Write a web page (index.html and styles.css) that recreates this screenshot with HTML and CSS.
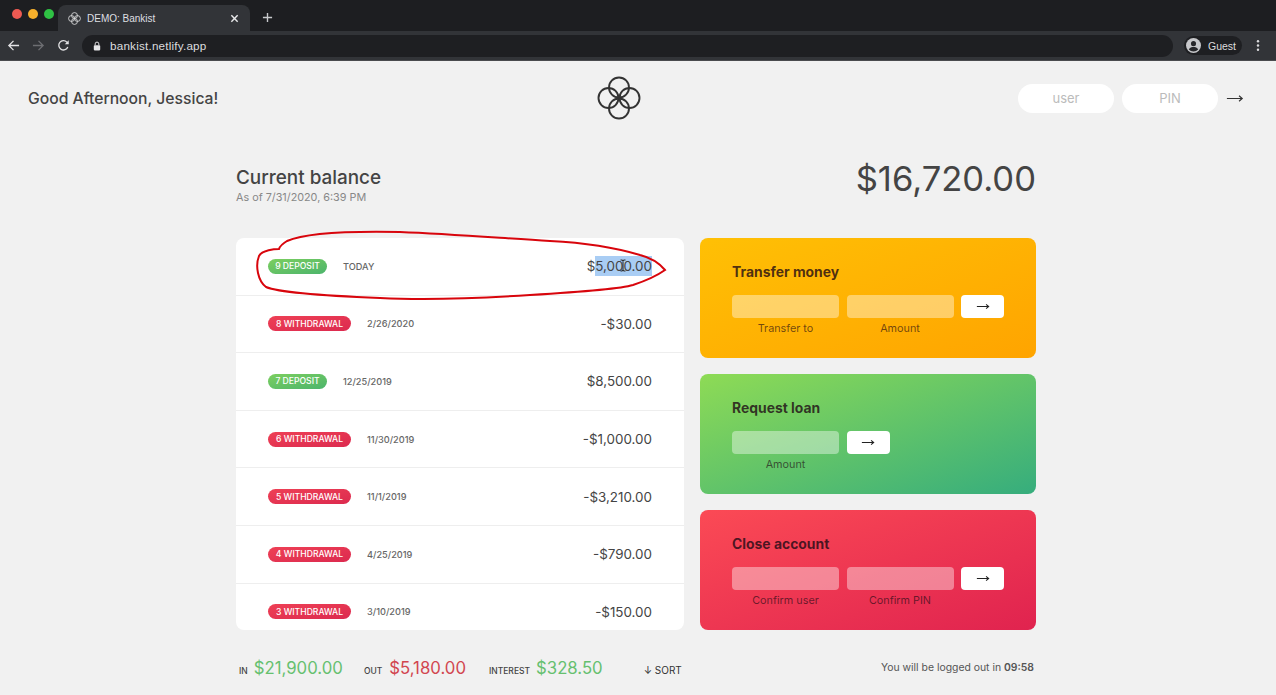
FILE: index.html
```html
<!DOCTYPE html>
<html lang="en">
<head>
<meta charset="utf-8">
<title>Bankist</title>
<link rel="stylesheet" href="styles.css">
</head>
<body>
<div class="chrome">
  <div class="tabbar">
    <div class="lights"><i class="light red"></i><i class="light amber"></i><i class="light green"></i></div>
    <div class="tab">
      <svg class="favicon" viewBox="0 0 44 44"><g fill="none" stroke="#d8d8da" stroke-width="3"><circle cx="22" cy="12" r="10"/><circle cx="22" cy="32" r="10"/><circle cx="12" cy="22" r="10"/><circle cx="32" cy="22" r="10"/></g></svg>
      <span class="tab-title">DEMO: Bankist</span>
      <svg class="tab-close" viewBox="0 0 10 10"><path d="M1.5 1.5l7 7M8.5 1.5l-7 7" stroke="#e8e8ea" stroke-width="1.6" fill="none"/></svg>
    </div>
    <svg class="newtab" viewBox="0 0 12 12"><path d="M6 1v10M1 6h10" stroke="#c8c9cc" stroke-width="1.5" fill="none"/></svg>
  </div>
  <div class="toolbar">
    <svg class="tool" viewBox="0 0 14 14"><path d="M13 7H2M7 2L2 7l5 5" stroke="#e3e3e5" stroke-width="1.4" fill="none"/></svg>
    <svg class="tool" viewBox="0 0 14 14"><path d="M1 7h11M7 2l5 5-5 5" stroke="#6d6e72" stroke-width="1.4" fill="none"/></svg>
    <svg class="tool" viewBox="0 0 14 14"><path d="M11.6 8.6A5 5 0 1 1 10.6 3.4L12 5" stroke="#e3e3e5" stroke-width="1.4" fill="none"/><path d="M12.6 1.4v4.2H8.4z" fill="#e3e3e5"/></svg>
    <div class="omnibox">
      <svg class="lock" viewBox="0 0 10 12"><path d="M2.700 5V3.400a2.300 2.300 0 0 1 4.600 0V5" stroke="#e6e6e8" stroke-width="1.2" fill="none"/><rect x="1" y="5" width="8" height="6.500" rx="1" fill="#e6e6e8"/></svg>
      <span class="url">bankist.netlify.app</span>
    </div>
    <div class="profile">
      <svg class="avatar" viewBox="0 0 16 16"><circle cx="8" cy="8" r="8" fill="#c6c7ca"/><circle cx="8" cy="6" r="2.700" fill="#26272a"/><path d="M3 12.200c1-2 3-2.600 5-2.600s4 .6 5 2.600A6.600 6.600 0 0 1 8 14.500a6.600 6.600 0 0 1-5-2.300z" fill="#26272a"/></svg>
      <span class="guest">Guest</span>
    </div>
    <svg class="kebab" viewBox="0 0 4 14"><g fill="#dcdcde"><circle cx="2" cy="2.500" r="1.300"/><circle cx="2" cy="7" r="1.300"/><circle cx="2" cy="11.500" r="1.300"/></g></svg>
  </div>
</div>

<nav class="nav">
  <p class="welcome">Good Afternoon, Jessica!</p>
  <svg class="logo" viewBox="0 0 44 44"><g fill="none" stroke="#333" stroke-width="1.900"><circle cx="22" cy="11.500" r="10"/><circle cx="22" cy="32.500" r="10"/><circle cx="11.500" cy="22" r="10"/><circle cx="32.500" cy="22" r="10"/></g></svg>
  <form class="login">
    <input class="login-input" placeholder="user">
    <input class="login-input" placeholder="PIN">
    <svg class="login-arrow" viewBox="0 0 20 10"><path d="M1 5h17M14.500 2l3.500 3-3.500 3" stroke="#333" stroke-width="1.300" fill="none"/></svg>
  </form>
</nav>

<main class="app">
  <section class="balance">
    <div class="balance-info">
      <p class="balance-label">Current balance</p>
      <p class="balance-date">As of 7/31/2020, 6:39 PM</p>
    </div>
    <p class="balance-value">$16,720.00</p>
  </section>

  <section class="columns">
    <div class="movements">
      <div class="row">
        <span class="badge deposit">9 deposit</span>
        <span class="date today">Today</span>
        <span class="value">$<span class="selected">5,000.00</span></span>
      </div>
      <div class="row">
        <span class="badge withdrawal">8 withdrawal</span>
        <span class="date">2/26/2020</span>
        <span class="value">-$30.00</span>
      </div>
      <div class="row">
        <span class="badge deposit">7 deposit</span>
        <span class="date">12/25/2019</span>
        <span class="value">$8,500.00</span>
      </div>
      <div class="row">
        <span class="badge withdrawal">6 withdrawal</span>
        <span class="date">11/30/2019</span>
        <span class="value">-$1,000.00</span>
      </div>
      <div class="row">
        <span class="badge withdrawal">5 withdrawal</span>
        <span class="date">11/1/2019</span>
        <span class="value">-$3,210.00</span>
      </div>
      <div class="row">
        <span class="badge withdrawal">4 withdrawal</span>
        <span class="date">4/25/2019</span>
        <span class="value">-$790.00</span>
      </div>
      <div class="row">
        <span class="badge withdrawal">3 withdrawal</span>
        <span class="date">3/10/2019</span>
        <span class="value">-$150.00</span>
      </div>
    </div>

    <div class="operations">
      <div class="op op-transfer">
        <h2 class="op-title">Transfer money</h2>
        <div class="op-form">
          <input class="op-input"><input class="op-input">
          <button class="op-btn" type="button"><svg class="op-arrow" viewBox="0 0 16 8"><path d="M1 4h13M11.500 1.600L14.500 4l-3 2.400" stroke="#222" stroke-width="1.200" fill="none"/></svg></button>
          <label class="op-label">Transfer to</label><label class="op-label">Amount</label>
        </div>
      </div>
      <div class="op op-loan">
        <h2 class="op-title">Request loan</h2>
        <div class="op-form op-form-loan">
          <input class="op-input">
          <button class="op-btn" type="button"><svg class="op-arrow" viewBox="0 0 16 8"><path d="M1 4h13M11.500 1.600L14.500 4l-3 2.400" stroke="#222" stroke-width="1.200" fill="none"/></svg></button>
          <label class="op-label">Amount</label>
        </div>
      </div>
      <div class="op op-close">
        <h2 class="op-title">Close account</h2>
        <div class="op-form">
          <input class="op-input"><input class="op-input">
          <button class="op-btn" type="button"><svg class="op-arrow" viewBox="0 0 16 8"><path d="M1 4h13M11.500 1.600L14.500 4l-3 2.400" stroke="#222" stroke-width="1.200" fill="none"/></svg></button>
          <label class="op-label">Confirm user</label><label class="op-label">Confirm PIN</label>
        </div>
      </div>
    </div>
  </section>

  <section class="footer">
    <div class="summary">
      <span class="sum-label">In</span><span class="sum-value pos">$21,900.00</span>
      <span class="sum-label gap">Out</span><span class="sum-value neg">$5,180.00</span>
      <span class="sum-label gap">Interest</span><span class="sum-value pos">$328.50</span>
      <span class="sort">↓ SORT</span>
    </div>
    <p class="timer">You will be logged out in <b>09:58</b></p>
  </section>
</main>

<svg class="scribble" viewBox="0 0 1276 695"><path d="M279 249C275 249 262 250 259 256C255 266 258 281 266 287C280 293 330 296 380 298C420 300 470 299 530 295C580 292 620 289 633 285C645 281 658 275 665 270C660 264 652 258 640 255C620 249 590 243 550 241C500 238 450 234 400 232C350 231 305 233 287 241C282 244 280 246 279 249Z" fill="none" stroke="#d8050c" stroke-width="2"/></svg>
<svg class="ibeam" viewBox="0 0 8 13"><path d="M1.500 1H3l1 1 1-1h1.500M1.500 12H3l1-1 1 1h1.500M4 2v9" fill="none" stroke="#333" stroke-width="1.100"/></svg>
</body>
</html>
```
FILE: styles.css
```css
* { box-sizing: border-box; margin: 0; padding: 0; }
html, body { height: 100%; }
body {
  position: relative;
  width: 1276px;
  height: 695px;
  overflow: hidden;
  background: #f1f1f1;
  color: #444;
  font-family: Inter, "Noto Sans", "Liberation Sans", sans-serif;
}

/* browser chrome */
.chrome { height: 61px; background: #323438; border-bottom: 1px solid #4a4b4e; }
.tabbar { display: flex; align-items: flex-end; height: 31px; background: #1d1e21; }
.lights { display: flex; gap: 6px; align-self: center; padding: 0 0 0 12px; width: 58px; margin-top: -3px; }
.light { width: 10px; height: 10px; border-radius: 50%; }
.light.red { background: #ee5a52; }
.light.amber { background: #f6b02c; }
.light.green { background: #2fc144; }
.tab {
  display: flex; align-items: center;
  width: 192px; height: 26px;
  padding: 0 8px 0 10px;
  background: #323438;
  border-radius: 8px 8px 0 0;
}
.favicon { width: 13px; height: 13px; }
.tab-title { flex: 1; margin-left: 6px; color: #dedfe1; font-size: 10px; font-family: "Liberation Sans", sans-serif; }
.tab-close { width: 9px; height: 9px; margin-right: 3px; }
.newtab { width: 11px; height: 11px; margin: 0 0 8px 12px; }
.toolbar { display: flex; align-items: center; height: 29px; padding: 0 16px 0 7px; }
.tool { width: 13px; height: 13px; margin-right: 12px; }
.omnibox {
  display: flex; align-items: center;
  flex: 1;
  height: 22px;
  padding-left: 11px;
  background: #1e1f22;
  border-radius: 11px;
}
.lock { width: 8px; height: 10px; }
.url { margin-left: 9px; color: #dcdcde; font-size: 11.7px; font-family: "Liberation Sans", sans-serif; letter-spacing: .2px; }
.profile {
  display: flex; align-items: center; gap: 7px;
  height: 19px; margin: 0 14px 0 11px; padding: 0 6px 0 2px;
  background: #1e1f22; border-radius: 10px;
}
.avatar { width: 15px; height: 15px; }
.guest { color: #dcdcde; font-size: 10.5px; font-family: "Liberation Sans", sans-serif; }
.kebab { width: 4px; height: 13px; }

/* nav */
.nav { display: grid; grid-template-columns: 569px 44px 1fr; align-items: center; height: 74px; padding: 0 32px 0 28px; }
.welcome { font-size: 15.7px; font-weight: 500; color: #444; }
.logo { width: 44px; height: 44px; }
.login { display: flex; align-items: center; justify-content: flex-end; gap: 8px; }
.login-input {
  width: 96px; height: 29px;
  border: 0; border-radius: 15px;
  background: #fff;
  text-align: center;
  font: 400 13px Inter, sans-serif;
  color: #444;
}
.login-input::placeholder { color: #bbb; opacity: 1; }
.login-arrow { width: 18px; height: 9px; }

/* main */
.app { width: 800px; margin: 0 auto 0 236px; }
.balance { display: flex; justify-content: space-between; align-items: center; height: 103px; padding: 0 0 17px; }
.balance-info { margin-top: 15px; }
.balance-label { font-size: 18.9px; font-weight: 500; color: #444; line-height: 24px; margin-bottom: 1px; }
.balance-date { font-size: 10.8px; color: #888; line-height: 14px; }
.balance-value { font-size: 34.6px; font-weight: 400; color: #444; }
.columns { display: grid; grid-template-columns: 448px 336px; column-gap: 16px; height: 392px; }

.movements { background: #fff; border-radius: 8px; overflow: hidden; }
.row {
  display: flex; align-items: center;
  height: 57.6px;
  padding: 0 32px;
  border-bottom: 1px solid #eee;
}
.badge {
  display: inline-flex; align-items: center; justify-content: center;
  height: 15px; padding: 0 8px;
  border-radius: 8px;
  color: #fff;
  font-size: 8.6px; font-weight: 500;
  text-transform: uppercase;
  white-space: nowrap;
}
.deposit { width: 59px; background: linear-gradient(to top left, #4cb46c, #7ccf5f); }
.withdrawal { width: 83px; background: linear-gradient(to top left, #dc2a4f, #ee4055); }
.date { margin-left: 16px; font-size: 9.2px; font-weight: 500; color: #666; }
.today { text-transform: uppercase; }
.value { margin-left: auto; font-size: 13.4px; font-weight: 400; color: #444; }
.selected { background: #a9cdf4; padding: 2px 0; }

.operations { display: flex; flex-direction: column; gap: 16px; }
.op { height: 120px; padding: 26px 32px 0; border-radius: 8px; }
.op-transfer { background: linear-gradient(to top left, #ffa400, #ffc005); }
.op-loan { background: linear-gradient(to top left, #36ad7d, #8edb55); }
.op-close { background: linear-gradient(to top left, #e0234f, #fb4a55); }
.op-title { font-size: 13.9px; font-weight: 700; line-height: 17px; margin-bottom: 14px; color: rgba(30, 10, 20, .8); }
.op-form { display: grid; grid-template-columns: 107px 107px 43px; column-gap: 7.5px; row-gap: 4px; }
.op-form-loan { grid-template-columns: 107px 43px; }
.op-input { height: 23px; border: 0; border-radius: 4px; background: rgba(255,255,255,.4); }
.op-btn { display: flex; align-items: center; justify-content: center; height: 23px; border: 0; border-radius: 4px; background: #fff; }
.op-arrow { width: 14px; height: 7px; }
.op-label { text-align: center; font-size: 10.8px; line-height: 14px; color: rgba(30, 10, 20, .65); }

.footer { display: flex; justify-content: space-between; align-items: center; height: 65px; padding: 10px 2px 0 3px; }
.summary { display: flex; align-items: baseline; }
.sum-label { font-size: 8.5px; font-weight: 500; text-transform: uppercase; color: #444; margin-right: 6px; }
.sum-label.gap { margin-left: 21px; }
.sum-value { font-size: 16.75px; font-weight: 400; }
.pos { color: #66c06f; }
.neg { color: #d2464f; margin: 0 2px 0 1px; }
.sort { margin-left: 41px; font-size: 10px; font-weight: 400; color: #333; }
.timer { font-size: 10.4px; color: #555; }
.timer b { font-weight: 600; }

/* annotation overlay */
.scribble { position: absolute; left: 0; top: 0; width: 1276px; height: 695px; pointer-events: none; }
.ibeam { position: absolute; left: 619px; top: 259px; width: 8px; height: 13px; }
```
